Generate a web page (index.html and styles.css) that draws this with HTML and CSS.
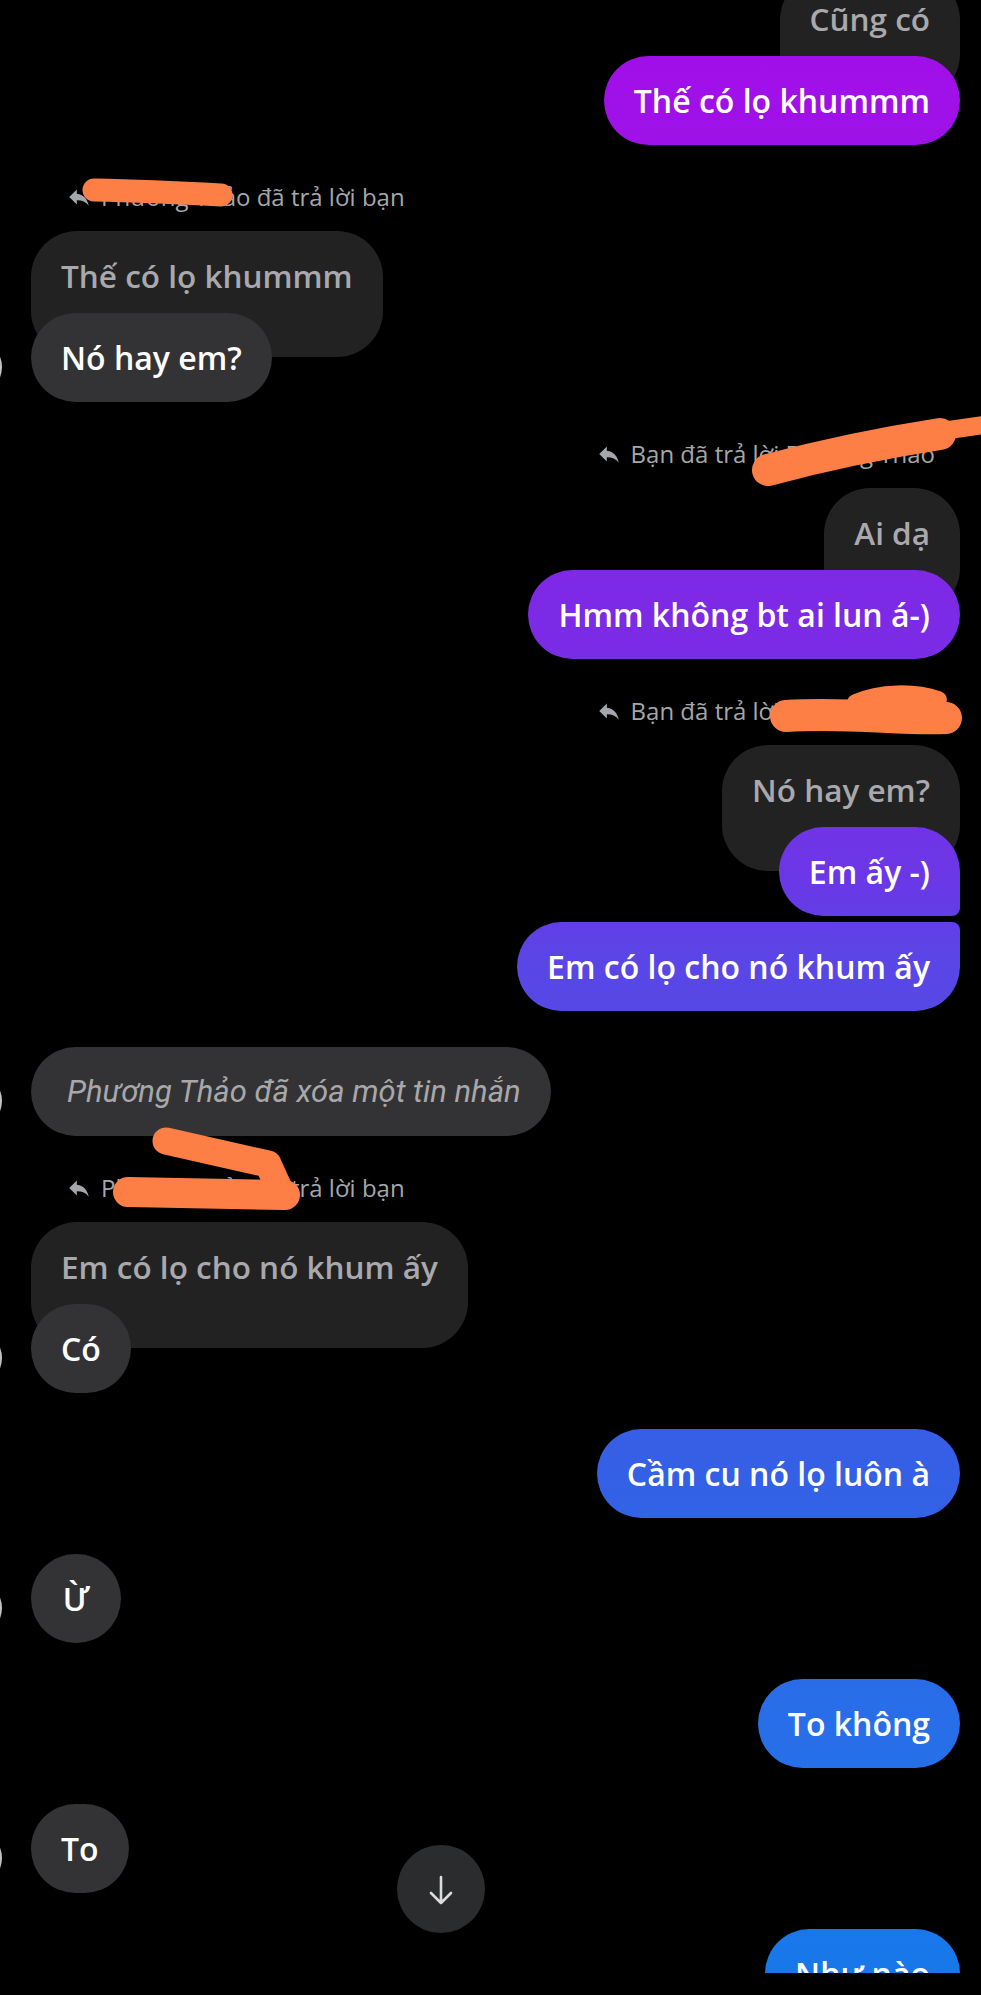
FILE: index.html
```html
<!DOCTYPE html>
<html lang="vi">
<head>
<meta charset="utf-8">
<title>Messenger</title>
<link rel="stylesheet" href="styles.css">
</head>
<body>
<div class="screen">
  <main class="thread">
    <section class="reply-group mine first">
      <div class="quoted">Cũng có</div>
      <div class="msg-row">
        <div class="bubble out">Thế có lọ khummm</div>
      </div>
    </section>

    <section class="reply-group theirs">
      <div class="reply-head">
        <svg class="reply-icon" viewBox="0 0 24 24"><path d="M10 9V5l-7 7 7 7v-4.1c5 0 8.5 1.6 11 5.1-1-5-4-10-11-11z"/></svg>
        <span>Phương Thảo đã trả lời bạn</span>
      </div>
      <div class="quoted">Thế có lọ khummm</div>
      <div class="msg-row">
        <span class="avatar"></span>
        <div class="bubble in">Nó hay em?</div>
      </div>
    </section>

    <section class="reply-group mine">
      <div class="reply-head">
        <svg class="reply-icon" viewBox="0 0 24 24"><path d="M10 9V5l-7 7 7 7v-4.1c5 0 8.5 1.6 11 5.1-1-5-4-10-11-11z"/></svg>
        <span>Bạn đã trả lời Phương Thảo</span>
      </div>
      <div class="quoted">Ai dạ</div>
      <div class="msg-row">
        <div class="bubble out">Hmm không bt ai lun á-)</div>
      </div>
    </section>

    <section class="reply-group mine">
      <div class="reply-head">
        <svg class="reply-icon" viewBox="0 0 24 24"><path d="M10 9V5l-7 7 7 7v-4.1c5 0 8.5 1.6 11 5.1-1-5-4-10-11-11z"/></svg>
        <span>Bạn đã trả lời Phương Thảo</span>
      </div>
      <div class="quoted">Nó hay em?</div>
      <div class="msg-row">
        <div class="bubble out grouped-bottom">Em ấy -)</div>
      </div>
    </section>

    <div class="row mine cont">
      <div class="bubble out grouped-top">Em có lọ cho nó khum ấy</div>
    </div>

    <div class="row theirs">
      <span class="avatar"></span>
      <div class="bubble in deleted">Phương Thảo đã xóa một tin nhắn</div>
    </div>

    <section class="reply-group theirs">
      <div class="reply-head">
        <svg class="reply-icon" viewBox="0 0 24 24"><path d="M10 9V5l-7 7 7 7v-4.1c5 0 8.5 1.6 11 5.1-1-5-4-10-11-11z"/></svg>
        <span>Phương Thảo đã trả lời bạn</span>
      </div>
      <div class="quoted">Em có lọ cho nó khum ấy</div>
      <div class="msg-row">
        <span class="avatar"></span>
        <div class="bubble in short">Có</div>
      </div>
    </section>

    <div class="row mine">
      <div class="bubble out">Cầm cu nó lọ luôn à</div>
    </div>

    <div class="row theirs">
      <span class="avatar"></span>
      <div class="bubble in short">Ừ</div>
    </div>

    <div class="row mine">
      <div class="bubble out">To không</div>
    </div>

    <div class="row theirs">
      <span class="avatar"></span>
      <div class="bubble in short">To</div>
    </div>

    <div class="row mine">
      <div class="bubble out">Như nào</div>
    </div>

    <svg class="scribbles" viewBox="0 0 981 1973" width="981" height="1973">
      <g fill="none" stroke="#fe7f46" stroke-linecap="round" stroke-linejoin="round">
        <path d="M94 190 Q150 191 221 195" stroke-width="23"/>
        <path d="M768 470 Q850 448 940 434" stroke-width="32"/>
        <path d="M935 432 L990 424" stroke-width="18"/>
        <path d="M786 716 C850 712 900 720 946 718" stroke-width="32"/>
        <path d="M856 703 C880 692 915 692 938 700" stroke-width="18"/>
        <path d="M166 1141 L268 1164 L278 1186" stroke-width="27"/>
        <path d="M128 1192 L285 1195" stroke-width="30"/>
      </g>
    </svg>
  </main>

  <button class="scroll-down" type="button" aria-label="Cuộn xuống">
    <svg viewBox="0 0 32 32" width="32" height="32"><path d="M16 4v26M6 20l10 10 10-10" fill="none" stroke="#dcdcdc" stroke-width="2.6" stroke-linecap="round" stroke-linejoin="round"/></svg>
  </button>
</div>
</body>
</html>
```

FILE: styles.css
```css
* { box-sizing: border-box; }

html, body {
  margin: 0;
  padding: 0;
  background: #000;
}

body {
  font-family: "Open Sans", Roboto, "Noto Sans", "Liberation Sans", sans-serif;
  color: #fff;
}

.screen {
  position: relative;
  width: 981px;
  height: 1995px;
  overflow: hidden;
  background: #000;
}

.thread {
  position: relative;
  height: 1973px;
  overflow: hidden;
  padding: 0 21px 0 31px;
  display: flex;
  flex-direction: column;
}

.reply-group {
  display: flex;
  flex-direction: column;
  margin-top: 37px;
}
.reply-group.first { margin-top: -26px; }
.reply-group.mine { align-items: flex-end; }
.reply-group.theirs { align-items: flex-start; }

.reply-head {
  height: 30px;
  margin-bottom: 19px;
  display: flex;
  align-items: center;
  gap: 9px;
  font-size: 24px;
  line-height: 30px;
  color: #a4a7ab;
  white-space: nowrap;
}
.theirs .reply-head { padding-left: 35px; }
.mine .reply-head { padding-right: 25px; }

.reply-icon {
  width: 26px;
  height: 26px;
  fill: #a4a7ab;
  flex: none;
}

.quoted {
  background: #222223;
  color: #a9a9ad;
  border-radius: 46px;
  padding: 26px 30px 63px;
  font-size: 31.5px;
  font-weight: 600;
  line-height: 37px;
  white-space: nowrap;
}

.msg-row {
  display: flex;
  align-items: flex-end;
  margin-top: -44px;
  position: relative;
}

.row {
  display: flex;
  align-items: flex-end;
  margin-top: 36px;
}
.row.mine { justify-content: flex-end; }
.row.cont { margin-top: 6px; }

.bubble {
  border-radius: 45px;
  padding: 26px 30px;
  font-size: 32px;
  font-weight: 600;
  line-height: 37px;
  white-space: nowrap;
}
.bubble.short { min-width: 90px; text-align: center; }

.bubble.in {
  background: #333335;
  color: #fff;
}

.bubble.out {
  color: #fff;
  background: linear-gradient(180deg,
    #a30ee8 0px,
    #a010e8 100px,
    #7c2ae6 615px,
    #6c36e6 870px,
    #5946e6 966px,
    #3460e6 1473px,
    #286ee8 1722px,
    #1878ea 1950px) fixed;
}

.bubble.grouped-bottom { border-bottom-right-radius: 8px; }
.bubble.grouped-top { border-top-right-radius: 8px; }

.bubble.deleted {
  font-family: Roboto, "Noto Sans", sans-serif;
  font-size: 31px;
  font-style: italic;
  font-weight: 400;
  color: #a8a8aa;
  padding: 26px 30px 26px 36px;
}

.avatar {
  flex: none;
  width: 56px;
  height: 56px;
  border-radius: 50%;
  background: #c2c2c2;
  margin-left: -85px;
  margin-right: 29px;
  margin-bottom: 7px;
}

.scribbles {
  position: absolute;
  left: 0;
  top: 0;
  pointer-events: none;
}

.scroll-down {
  position: absolute;
  left: 397px;
  top: 1845px;
  width: 88px;
  height: 88px;
  border: none;
  border-radius: 50%;
  background: #2b2c2e;
  padding: 0;
  display: flex;
  align-items: center;
  justify-content: center;
}
```
